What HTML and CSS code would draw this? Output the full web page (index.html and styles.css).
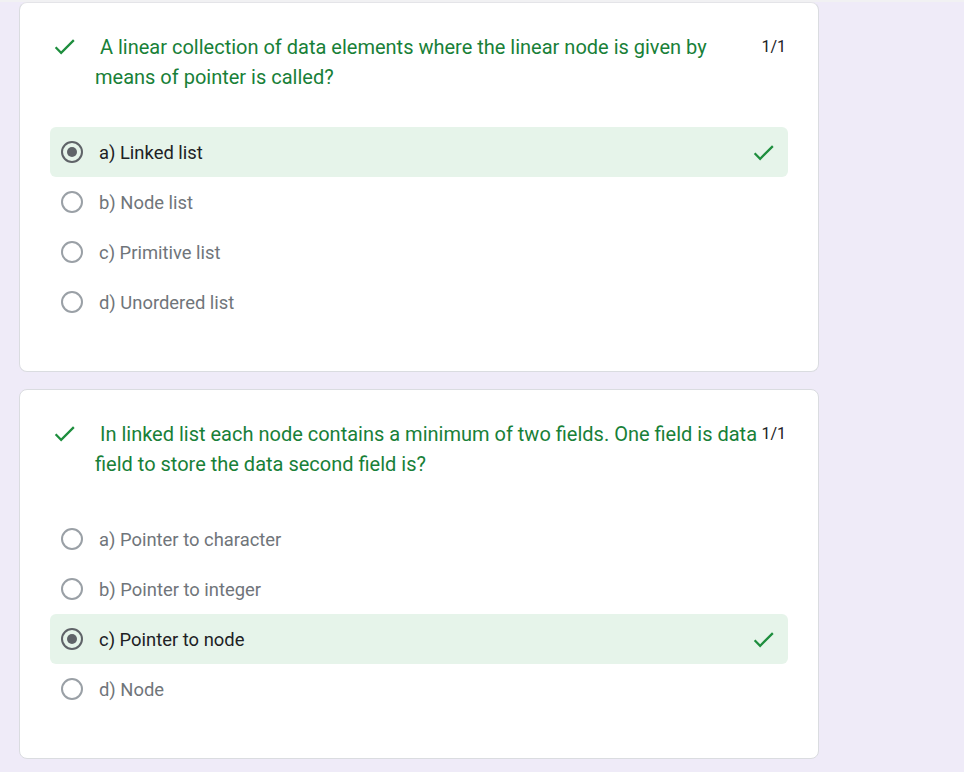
FILE: index.html
```html
<!DOCTYPE html>
<html>
<head>
<meta charset="utf-8">
<link rel="stylesheet" href="styles.css">
</head>
<body>
<div class="topstrip"></div>
<main class="page">
  <section class="card">
    <div class="q-head">
      <svg class="q-check" viewBox="0 0 24 24"><path d="M9 16.17L4.83 12l-1.42 1.41L9 19 21 7l-1.41-1.41z"/></svg>
      <div class="q-text">&nbsp;A linear collection of data elements where the linear node is given by means of pointer is called?</div>
      <div class="q-points">1/1</div>
    </div>
    <div class="options">
      <div class="opt correct">
        <span class="radio checked"></span>
        <span class="opt-label">a) Linked list</span>
        <svg class="opt-check" viewBox="0 0 24 24"><path d="M9 16.17L4.83 12l-1.42 1.41L9 19 21 7l-1.41-1.41z"/></svg>
      </div>
      <div class="opt"><span class="radio"></span><span class="opt-label">b) Node list</span></div>
      <div class="opt"><span class="radio"></span><span class="opt-label">c) Primitive list</span></div>
      <div class="opt"><span class="radio"></span><span class="opt-label">d) Unordered list</span></div>
    </div>
  </section>

  <section class="card">
    <div class="q-head">
      <svg class="q-check" viewBox="0 0 24 24"><path d="M9 16.17L4.83 12l-1.42 1.41L9 19 21 7l-1.41-1.41z"/></svg>
      <div class="q-text">&nbsp;In linked list each node contains a minimum of two fields. One field is data field to store the data second field is?</div>
      <div class="q-points">1/1</div>
    </div>
    <div class="options">
      <div class="opt"><span class="radio"></span><span class="opt-label">a) Pointer to character</span></div>
      <div class="opt"><span class="radio"></span><span class="opt-label">b) Pointer to integer</span></div>
      <div class="opt correct">
        <span class="radio checked"></span>
        <span class="opt-label">c) Pointer to node</span>
        <svg class="opt-check" viewBox="0 0 24 24"><path d="M9 16.17L4.83 12l-1.42 1.41L9 19 21 7l-1.41-1.41z"/></svg>
      </div>
      <div class="opt"><span class="radio"></span><span class="opt-label">d) Node</span></div>
    </div>
  </section>
</main>
</body>
</html>
```

FILE: styles.css
```css
* { box-sizing: border-box; }
html, body { margin: 0; padding: 0; }
body {
  background: #efebf8;
  font-family: Roboto, "Liberation Sans", Arial, sans-serif;
  height: 772px;
  overflow: hidden;
}
.topstrip {
  height: 2px;
  background: #f1f1f3;
}
.page {
  padding-left: 19px;
}
.card {
  width: 800px;
  background: #fff;
  border: 1px solid #dadce0;
  border-radius: 8px;
  padding: 29px 24px 44px;
  margin-bottom: 17px;
}
.card:first-child { border-top-color: #e4e4e8; }
.q-head {
  display: flex;
  align-items: flex-start;
}
.q-check {
  width: 27px;
  height: 27px;
  fill: #1e8e3e;
  margin: 1px 17px 0 7px;
  flex: none;
}
.q-text {
  flex: 1;
  font-size: 20px;
  line-height: 30px;
  color: #188038;
}
.q-points {
  flex: none;
  font-size: 16px;
  line-height: 30px;
  color: #202124;
  margin: 0 8px 0 3px;
}
.options {
  margin-top: 35px;
}
.opt {
  height: 50px;
  margin: 0 6px;
  padding: 0 12px 0 11px;
  display: flex;
  align-items: center;
  border-radius: 6px;
}
.opt.correct { background: #e6f4ea; }
.radio {
  width: 22px;
  height: 22px;
  border: 2px solid #9aa0a6;
  border-radius: 50%;
  flex: none;
  display: flex;
  align-items: center;
  justify-content: center;
}
.radio.checked { border-color: #5f6368; }
.radio.checked::after {
  content: "";
  width: 10px;
  height: 10px;
  border-radius: 50%;
  background: #5f6368;
}
.opt-label {
  flex: 1;
  margin-left: 16px;
  font-size: 18.4px;
  color: #70757a;
}
.opt.correct .opt-label { color: #202124; }
.opt-check {
  width: 27px;
  height: 27px;
  fill: #1e8e3e;
  flex: none;
  margin-right: -1px;
}
```
